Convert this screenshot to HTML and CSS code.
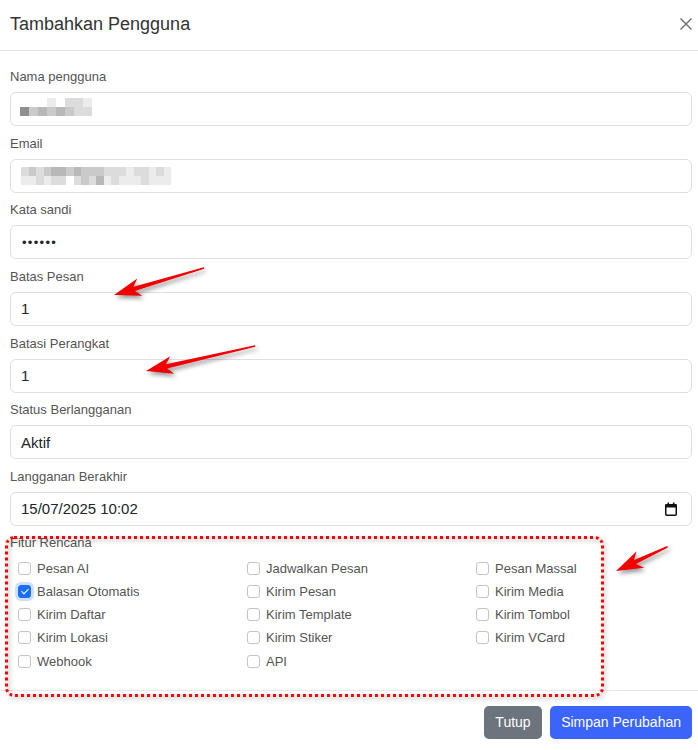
FILE: index.html
```html
<!DOCTYPE html>
<html>
  <head>
    <meta charset="utf-8">
    <title>Tambahkan Pengguna</title>
    <link rel="stylesheet" href="styles.css">
  </head>
  <body>
    <div class="modal">
      <div class="modal-header">
        <h5 class="modal-title">Tambahkan Pengguna</h5>
        <button class="btn-close" type="button">
          <svg width="12" height="12" viewBox="0 0 12 12"><path d="M0.5 0.5 L11.5 11.5 M11.5 0.5 L0.5 11.5" stroke="#666" stroke-width="1.3" fill="none"/></svg>
        </button>
      </div>

      <div class="modal-body">
        <div class="field">
          <label class="field-label">Nama pengguna</label>
          <div class="control">
            <span class="mosaic mosaic-name">
              <i class="c0"></i><i class="c0"></i><i class="c0"></i><i class="c1"></i><i class="c0"></i><i class="c2"></i><i class="c2"></i><i class="c1"></i>
              <i class="c5"></i><i class="c3"></i><i class="c4"></i><i class="c3"></i><i class="c4"></i><i class="c3"></i><i class="c2"></i><i class="c2"></i>
              <i class="c0"></i><i class="c0"></i><i class="c0"></i><i class="c0"></i><i class="c0"></i><i class="c0"></i><i class="c0"></i><i class="c0"></i>
            </span>
          </div>
        </div>

        <div class="field">
          <label class="field-label">Email</label>
          <div class="control">
            <span class="mosaic mosaic-email">
              <i class="c2"></i><i class="c3"></i><i class="c2"></i><i class="c3"></i><i class="c4"></i><i class="c4"></i><i class="c3"></i><i class="c4"></i><i class="c3"></i><i class="c3"></i>
              <i class="c3"></i><i class="c2"></i><i class="c2"></i><i class="c2"></i><i class="c1"></i><i class="c2"></i><i class="c2"></i><i class="c1"></i><i class="c2"></i><i class="c1"></i>
              <i class="c1"></i><i class="c1"></i><i class="c2"></i><i class="c1"></i><i class="c2"></i><i class="c2"></i><i class="c0"></i><i class="c2"></i><i class="c3"></i><i class="c2"></i>
              <i class="c4"></i><i class="c1"></i><i class="c2"></i><i class="c1"></i><i class="c1"></i><i class="c1"></i><i class="c2"></i><i class="c1"></i><i class="c1"></i><i class="c1"></i>
            </span>
          </div>
        </div>

        <div class="field">
          <label class="field-label">Kata sandi</label>
          <div class="control password">&bull;&bull;&bull;&bull;&bull;&bull;</div>
        </div>

        <div class="field">
          <label class="field-label">Batas Pesan</label>
          <div class="control">1</div>
        </div>

        <div class="field">
          <label class="field-label">Batasi Perangkat</label>
          <div class="control">1</div>
        </div>

        <div class="field">
          <label class="field-label">Status Berlangganan</label>
          <div class="control">Aktif</div>
        </div>

        <div class="field">
          <label class="field-label">Langganan Berakhir</label>
          <div class="control control-date">
            <span>15/07/2025 10:02</span>
            <svg class="calendar" width="12" height="14" viewBox="0 0 12 14">
              <rect x="0.75" y="2.75" width="10.5" height="10.5" rx="1" fill="none" stroke="#111" stroke-width="1.5"/>
              <rect x="0" y="2.5" width="12" height="3" fill="#111"/>
              <rect x="2.5" y="0.5" width="1.6" height="3" fill="#111"/>
              <rect x="7.9" y="0.5" width="1.6" height="3" fill="#111"/>
            </svg>
          </div>
        </div>

        <div class="features">
          <div class="features-label">Fitur Rencana</div>
          <div class="feature-grid">
            <label class="feature"><span class="check"></span>Pesan AI</label>
            <label class="feature"><span class="check"></span>Jadwalkan Pesan</label>
            <label class="feature"><span class="check"></span>Pesan Massal</label>
            <label class="feature"><span class="check checked"></span>Balasan Otomatis</label>
            <label class="feature"><span class="check"></span>Kirim Pesan</label>
            <label class="feature"><span class="check"></span>Kirim Media</label>
            <label class="feature"><span class="check"></span>Kirim Daftar</label>
            <label class="feature"><span class="check"></span>Kirim Template</label>
            <label class="feature"><span class="check"></span>Kirim Tombol</label>
            <label class="feature"><span class="check"></span>Kirim Lokasi</label>
            <label class="feature"><span class="check"></span>Kirim Stiker</label>
            <label class="feature"><span class="check"></span>Kirim VCard</label>
            <label class="feature"><span class="check"></span>Webhook</label>
            <label class="feature"><span class="check"></span>API</label>
          </div>
        </div>
      </div>

      <div class="modal-footer">
        <button class="btn btn-secondary" type="button">Tutup</button>
        <button class="btn btn-primary" type="button">Simpan Perubahan</button>
      </div>
    </div>

    <!-- annotations drawn on top of the screenshot -->
    <div class="highlight-box"></div>
    <svg class="arrows" width="698" height="750" viewBox="0 0 698 750">
      <g transform="translate(114 295) rotate(-16.7)">
        <polygon points="0,0 27,-9 21,-2.2 94,-0.8 94,0.8 21,2.2 27,9"/>
      </g>
      <g transform="translate(146 371) rotate(-12.9)">
        <polygon points="0,0 27,-9 21,-2.2 112,-0.8 112,0.8 21,2.2 27,9"/>
      </g>
      <g transform="translate(616 571) rotate(-25.2)">
        <polygon points="0,0 27,-9 21,-2.2 57,-0.8 57,0.8 21,2.2 27,9"/>
      </g>
    </svg>
  </body>
</html>
```

FILE: styles.css
```css
body { margin: 0; font-family: "Liberation Sans", Arial, sans-serif; color: #212529; background: #fff; }

.modal { width: 698px; }

.modal-header { display: flex; align-items: center; justify-content: space-between; height: 51px; padding: 0 6px 2px 10px; box-sizing: border-box; border-bottom: 1px solid #e2e4e7; }
.modal-title { margin: 0; font-size: 18px; font-weight: 400; color: #333; }
.btn-close { background: none; border: 0; padding: 0; width: 12px; height: 12px; display: flex; }

.modal-body { padding: 16px 6px 17px 10px; }

.field { margin-bottom: 7.67px; }
.field-label { display: block; font-size: 13px; line-height: 19px; margin-bottom: 6px; color: #555; }
.control { display: flex; align-items: center; height: 34px; box-sizing: border-box; border: 1px solid #dcdfe3; border-radius: 6px; padding: 0 10px; font-size: 15px; color: #212529; background: #fff; }
.control.password { font-size: 13px; letter-spacing: 1.3px; padding-left: 11px; }
.control-date { justify-content: space-between; }
.calendar { margin-right: 4px; }

.mosaic { display: grid; }
.mosaic i { display: block; }
.mosaic-name { grid-template-columns: repeat(8, 9px); grid-auto-rows: 9px; margin-left: -1px; margin-top: 4px; }
.mosaic-email { grid-template-columns: repeat(20, 7.5px); grid-auto-rows: 9px; }
.c0 { background: #fff; }
.c1 { background: #ececec; }
.c2 { background: #dcdcdc; }
.c3 { background: #cacaca; }
.c4 { background: #b8b8b8; }
.c5 { background: #8f8f8f; }

.features-label { font-size: 13px; line-height: 18px; color: #555; margin-bottom: 5px; }
.feature-grid { display: grid; grid-template-columns: repeat(3, 229px); padding-left: 8px; }
.feature { display: flex; align-items: center; gap: 6px; height: 23.25px; font-size: 13px; color: #555; }
.check { width: 13px; height: 13px; box-sizing: border-box; border: 1px solid #c4c4c4; border-radius: 3px; background: #fff; position: relative; flex-shrink: 0; }
.check.checked { background: #1a6ef5; border-color: #1a6ef5; box-shadow: 0 0 0 3px rgba(26, 110, 245, 0.22); }
.check.checked::after { content: ""; position: absolute; left: 3.5px; top: 1.2px; width: 3px; height: 6px; border: solid #fff; border-width: 0 1.6px 1.6px 0; transform: rotate(45deg); }

.modal-footer { display: flex; justify-content: flex-end; gap: 8px; padding: 15px 6px; border-top: 1px solid #e6e8ea; }
.btn { height: 33px; padding: 0 11px; border: 0; border-radius: 5px; font-family: "Liberation Sans", Arial, sans-serif; font-size: 14px; color: #fff; }
.btn-secondary { background: #6c757d; padding: 0 11.5px; }
.btn-primary { background: #3a64fa; }

.highlight-box { position: absolute; left: 5px; top: 536px; width: 599px; height: 161px; box-sizing: border-box; border: 3px dotted #ff0000; border-radius: 9px; filter: drop-shadow(2px 2px 2px rgba(0, 0, 0, 0.35)); }
.arrows { position: absolute; left: 0; top: 0; pointer-events: none; fill: #f20000; filter: drop-shadow(2px 3px 2px rgba(0, 0, 0, 0.4)); }
```
